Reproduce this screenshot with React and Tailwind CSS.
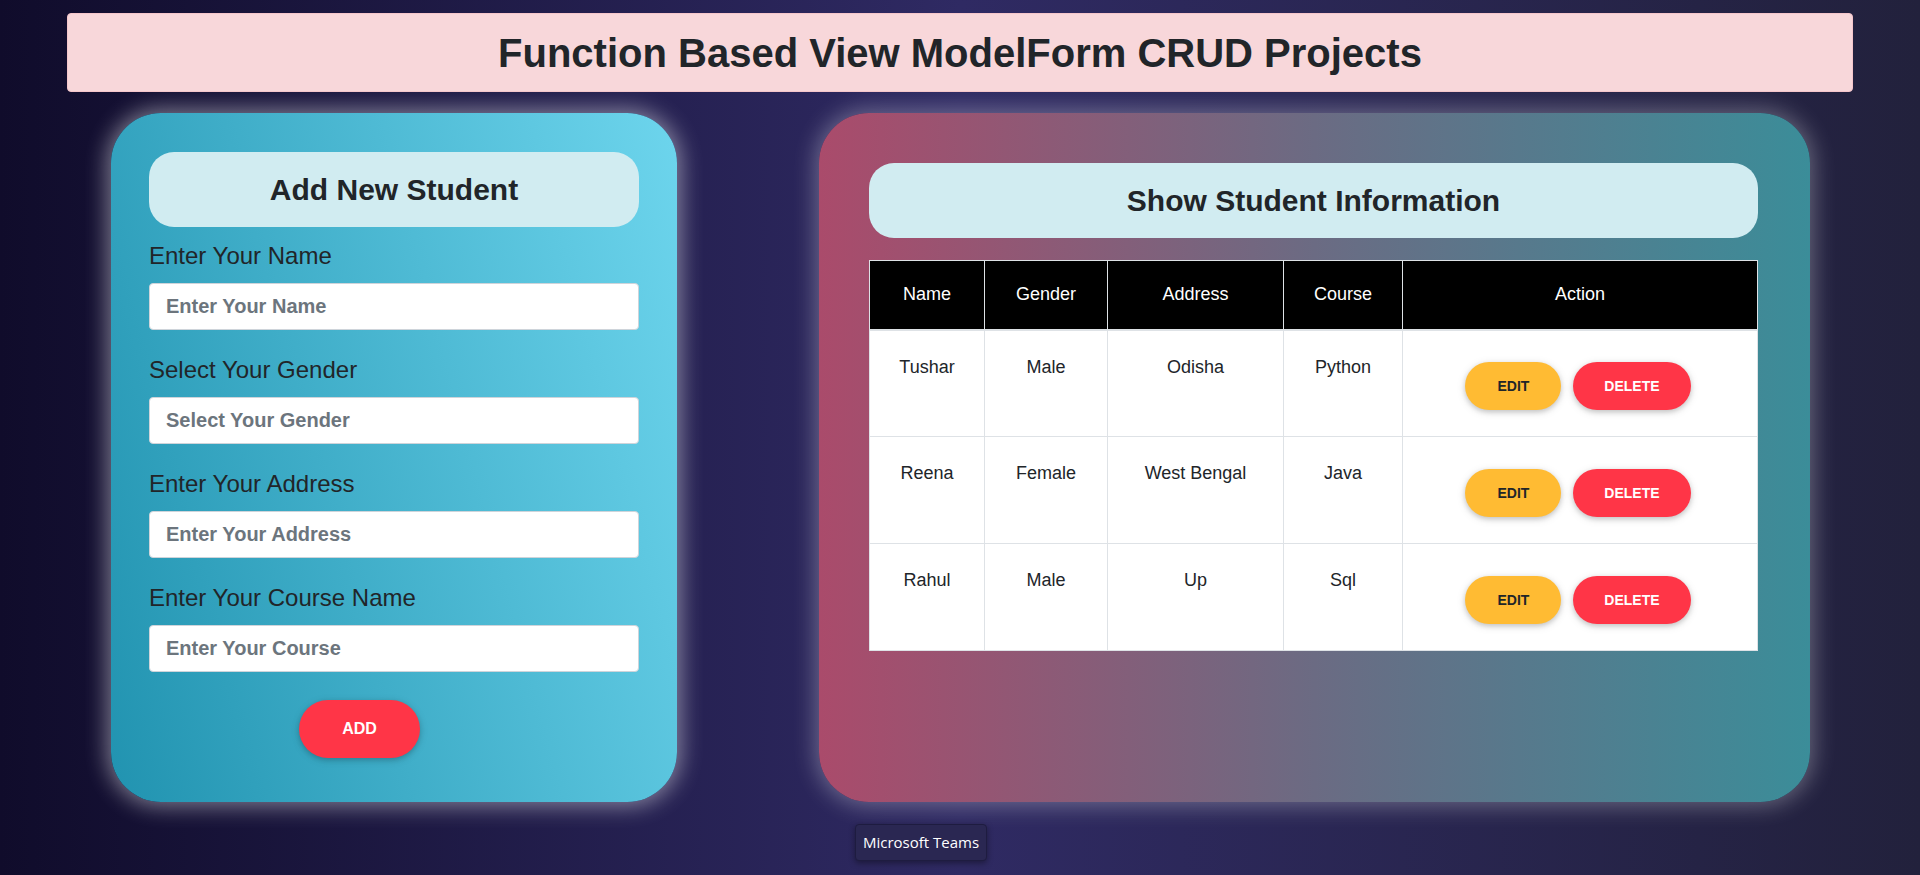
import React from "react";

const students = [
  { name: "Tushar", gender: "Male", address: "Odisha", course: "Python" },
  { name: "Reena", gender: "Female", address: "West Bengal", course: "Java" },
  { name: "Rahul", gender: "Male", address: "Up", course: "Sql" },
];

const fields = [
  { label: "Enter Your Name", placeholder: "Enter Your Name" },
  { label: "Select Your Gender", placeholder: "Select Your Gender" },
  { label: "Enter Your Address", placeholder: "Enter Your Address" },
  { label: "Enter Your Course Name", placeholder: "Enter Your Course" },
];

const btnShadow = "shadow-[0_2px_5px_0_rgba(0,0,0,0.16),0_2px_10px_0_rgba(0,0,0,0.12)]";

export default function App() {
  return (
    <div className="relative min-h-screen bg-[linear-gradient(to_right,#100c2b,#2f2a63_50%,#22213c)] font-['Liberation_Sans',Arial,sans-serif] text-[#212529] pt-[13px]">
      <div className="mx-[67px] h-[79px] rounded-[4px] bg-[#f8d7da] border border-[#f5c6cb] flex items-center justify-center">
        <h1 className="text-[40px] font-bold leading-none">Function Based View ModelForm CRUD Projects</h1>
      </div>

      <div className="flex pl-[111px] gap-[142px] mt-[21px]">
        {/* add form */}
        <div className="w-[566px] h-[689px] rounded-[50px] bg-[linear-gradient(75deg,#2193b0,#6dd5ed)] shadow-[0_0_22px_4px_rgba(255,255,255,0.45)] px-[38px] pt-[39px]">
          <div className="h-[75px] rounded-[25px] bg-[#d1ecf1] flex items-center justify-center mb-[14px]">
            <h2 className="text-[30px] font-bold">Add New Student</h2>
          </div>
          {fields.map(f => (
            <div key={f.label} className="mb-[25px]">
              <label className="block text-[24px] leading-[29px] mb-[13px]">{f.label}</label>
              <input
                className="w-full h-[47px] bg-white rounded-[4px] border border-[#ced4da] px-[16px] text-[20px] font-bold placeholder:text-[#6c757d] outline-none"
                placeholder={f.placeholder}
              />
            </div>
          ))}
          <button className={`ml-[150px] mt-[3px] w-[121px] h-[58px] rounded-full bg-[#ff3547] text-white font-bold text-[16px] ${btnShadow}`}>
            ADD
          </button>
        </div>

        {/* student list */}
        <div className="w-[991px] h-[689px] rounded-[50px] bg-[linear-gradient(to_right,#aa4b6b,#6b6b83,#3b8d99)] shadow-[0_0_22px_4px_rgba(255,255,255,0.3)] pl-[50px] pr-[52px] pt-[50px]">
          <div className="h-[75px] rounded-[25px] bg-[#d1ecf1] flex items-center justify-center mb-[22px]">
            <h2 className="text-[30px] font-bold">Show Student Information</h2>
          </div>
          <table className="w-full border-collapse bg-white text-[18px] border border-[#dee2e6]">
            <thead>
              <tr className="bg-black text-white h-[69px]">
                <th className="w-[115px] font-normal border border-[#dee2e6] border-b-2">Name</th>
                <th className="w-[123px] font-normal border border-[#dee2e6] border-b-2">Gender</th>
                <th className="w-[176px] font-normal border border-[#dee2e6] border-b-2">Address</th>
                <th className="w-[119px] font-normal border border-[#dee2e6] border-b-2">Course</th>
                <th className="font-normal border border-[#dee2e6] border-b-2">Action</th>
              </tr>
            </thead>
            <tbody>
              {students.map(s => (
                <tr key={s.name} className="h-[107px]">
                  <td className="align-top text-center pt-[23px] border border-[#dee2e6]">{s.name}</td>
                  <td className="align-top text-center pt-[23px] border border-[#dee2e6]">{s.gender}</td>
                  <td className="align-top text-center pt-[23px] border border-[#dee2e6]">{s.address}</td>
                  <td className="align-top text-center pt-[23px] border border-[#dee2e6]">{s.course}</td>
                  <td className="border border-[#dee2e6]">
                    <div className="flex justify-center gap-[12px] mt-[6px] pr-[4px]">
                      <button className={`h-[48px] px-[32px] rounded-full bg-[#ffbb33] text-[#212529] font-bold text-[14px] ${btnShadow}`}>
                        EDIT
                      </button>
                      <button className={`h-[48px] px-[31px] rounded-full bg-[#ff3547] text-white font-bold text-[14px] ${btnShadow}`}>
                        DELETE
                      </button>
                    </div>
                  </td>
                </tr>
              ))}
            </tbody>
          </table>
        </div>
      </div>

      {/* taskbar tooltip */}
      <div className="absolute left-[855px] top-[824px] w-[132px] h-[37px] rounded-[4px] bg-[#2a2752] border border-[#1e1c40] shadow-[0_2px_6px_rgba(0,0,0,0.4)] flex items-center justify-center text-white text-[15px] font-['Open_Sans',sans-serif]">
        Microsoft Teams
      </div>
    </div>
  );
}
